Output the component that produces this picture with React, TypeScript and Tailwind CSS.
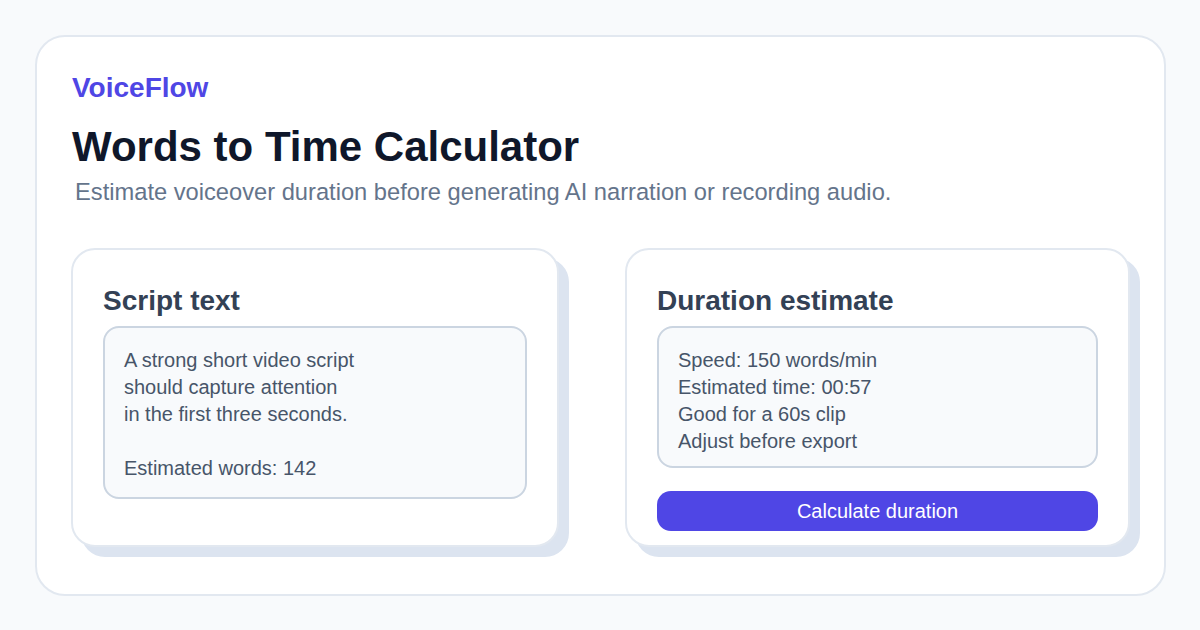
import React from 'react';

const scriptLines = [
  'A strong short video script',
  'should capture attention',
  'in the first three seconds.',
  '\u00a0',
  'Estimated words: 142',
];

const estimateLines = [
  'Speed: 150 words/min',
  'Estimated time: 00:57',
  'Good for a 60s clip',
  'Adjust before export',
];

function Panel({ title, width, children }: { title: string; width: string; children: React.ReactNode }) {
  return (
    <section
      className={`${width} h-[299px] shrink-0 rounded-[24px] border-2 border-[#e2e8f0] bg-white px-[30px] pt-[35px] shadow-[10px_10px_0_0_#dce4f0]`}
    >
      <h2 className="text-[28px] font-bold leading-[32px] text-[#334155]">{title}</h2>
      <div className="mt-[9px]">{children}</div>
    </section>
  );
}

function TextBox({ lines, height }: { lines: string[]; height: string }) {
  return (
    <div className={`${height} rounded-[16px] border-2 border-[#cbd5e1] bg-[#f8fafc] px-[19px] pt-[19px]`}>
      {lines.map((line, i) => (
        <p key={i} className="text-[20px] leading-[27px] text-[#475569]">
          {line}
        </p>
      ))}
    </div>
  );
}

export default function App() {
  return (
    <div
      className="h-[630px] w-[1200px] bg-[#f8fafc] p-[35px]"
      style={{ fontFamily: '"Liberation Sans", Arial, sans-serif' }}
    >
      <div className="h-[561px] w-[1131px] rounded-[30px] border-2 border-[#e2e8f0] bg-white px-[34px] pt-[37px]">
        <div className="pl-[1px] text-[28px] font-bold leading-[28px] text-[#4f46e5]">VoiceFlow</div>
        <h1 className="mt-[21px] pl-[1px] text-[42px] font-bold leading-[48px] text-[#0f172a]">
          Words to Time Calculator
        </h1>
        <p className="mt-[7px] pl-[4px] text-[23.7px] leading-[28px] text-[#64748b]">
          Estimate voiceover duration before generating AI narration or recording audio.
        </p>

        <div className="mt-[42px] flex gap-[66px]">
          <Panel title="Script text" width="w-[488px]">
            <TextBox lines={scriptLines} height="h-[173px]" />
          </Panel>
          <Panel title="Duration estimate" width="w-[505px]">
            <TextBox lines={estimateLines} height="h-[142px]" />
            <button className="mt-[23px] h-[40px] w-full rounded-[14px] bg-[#4f46e5] text-[20px] text-white">
              Calculate duration
            </button>
          </Panel>
        </div>
      </div>
    </div>
  );
}
